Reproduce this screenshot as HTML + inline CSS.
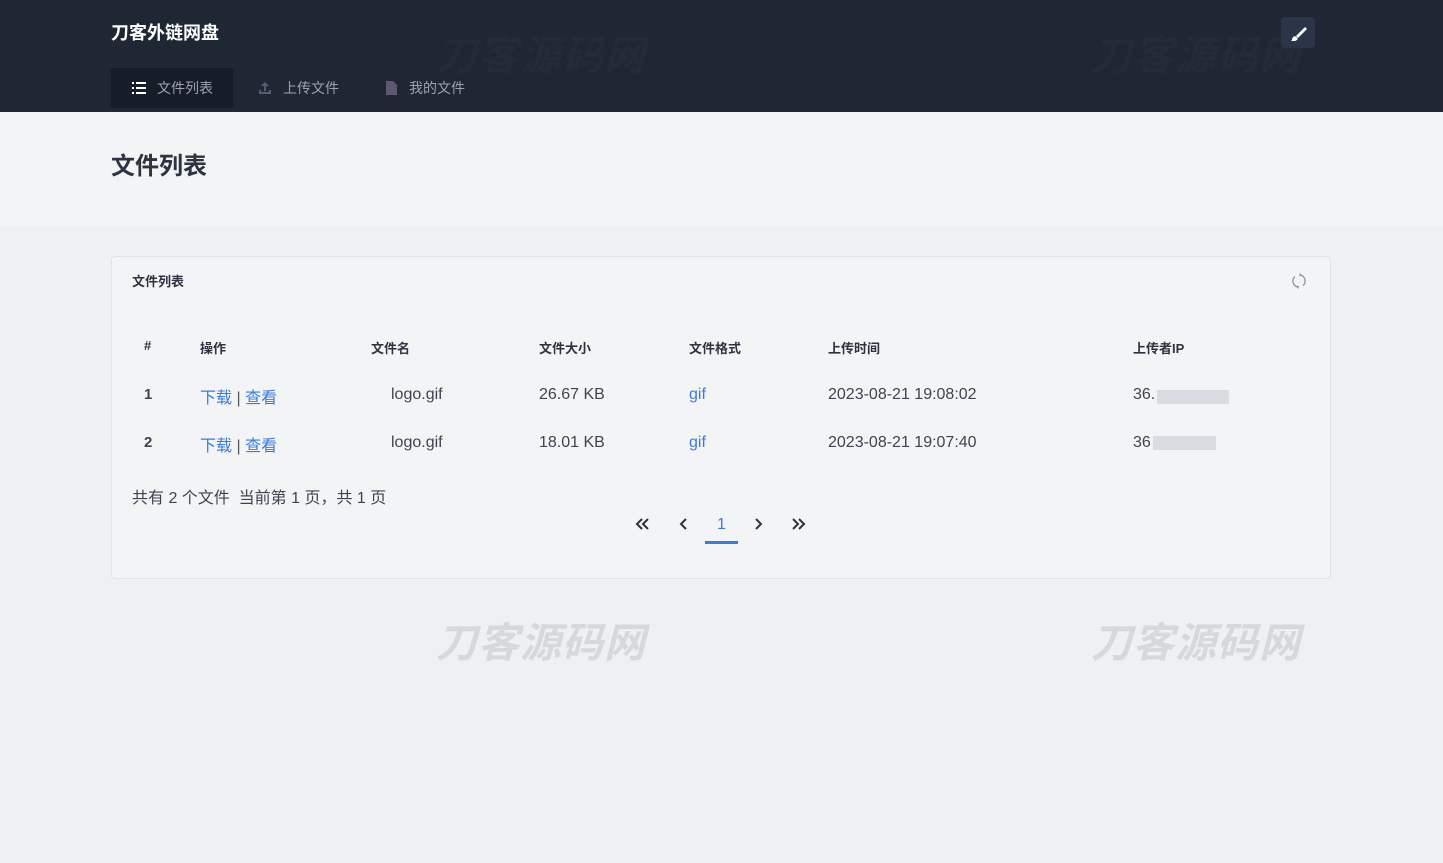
<!DOCTYPE html>
<html><head><meta charset="utf-8">
<style>
*{margin:0;padding:0;box-sizing:border-box}
body{width:1443px;height:863px;overflow:hidden;font-family:"Liberation Sans","Noto Sans CJK SC",sans-serif;background:#edf1f4;position:relative;color:#374151}
.hdr{position:absolute;left:0;top:0;width:1443px;height:112px;background:#1f2735}
.title{position:absolute;left:111px;top:19px;color:#fff;font-size:18px;font-weight:bold}
.brush{position:absolute;left:1281px;top:17px;width:34px;height:31px;background:#2b3547;border-radius:4px}
.tab{position:absolute;top:68px;height:40px;font-size:14px;color:#9ca3af;line-height:40px}
.tab.act{background:#171d28;left:111px;width:122px;padding-left:46px}
.gray{position:absolute;left:0;top:112px;width:1443px;height:113px;background:#f3f4f6}
h1{position:absolute;left:111px;top:146px;font-size:24px;color:#2d3340;font-weight:bold}
.wm{position:absolute;font-size:41px;font-weight:bold;font-style:italic;color:#d6d9dc;letter-spacing:1px}
.card{position:absolute;left:111px;top:256px;width:1220px;height:323px;background:#f3f4f6;border:1px solid #dde4ea;border-radius:4px}
.ct{position:absolute;left:20px;top:14px;font-size:13px;font-weight:bold;color:#2d3340}
.th{position:absolute;top:81px;font-size:13px;font-weight:bold;color:#2d3340}
.td{position:absolute;font-size:15px;color:#3d4451}
.lk{color:#3b7be0}
.blur{position:absolute;background:#d9dce1;height:14px}
.pg{position:absolute;top:257px;font-size:16px;color:#2d3340}
</style></head><body>
<div class="hdr">
<div class="wm" style="left:436px;top:22px;color:#232b39">刀客源码网</div>
<div class="wm" style="left:1091px;top:22px;color:#232b39">刀客源码网</div>
<div class="title">刀客外链网盘</div>
<div class="brush"><svg width="34" height="31" viewBox="0 0 34 31"><path d="M24 10 L15 19 L17 21 L26 12 Z" fill="#fff"/><path d="M14 19 Q11 20 11 23 L10 24 L14 24 Q17 23 16.5 21 Z" fill="#fff"/></svg></div>
<div class="tab act"><svg style="position:absolute;left:21px;top:14px" width="14" height="12"><rect x="0" y="0" width="2" height="2" fill="#fff"/><rect x="4" y="0" width="10" height="2" fill="#fff"/><rect x="0" y="5" width="2" height="2" fill="#fff"/><rect x="4" y="5" width="10" height="2" fill="#fff"/><rect x="0" y="10" width="2" height="2" fill="#fff"/><rect x="4" y="10" width="10" height="2" fill="#fff"/></svg>文件列表</div>
<div class="tab" style="left:258px;padding-left:25px"><svg style="position:absolute;left:0;top:13px" width="14" height="14"><path d="M7 1 L3 5 H6 V10 H8 V5 H11 Z M1 9 V13 H13 V9 H11 V11 H3 V9Z" fill="#5d5873"/></svg>上传文件</div>
<div class="tab" style="left:386px;padding-left:23px"><svg style="position:absolute;left:0;top:13px" width="11" height="14"><path d="M0 0 H7 L11 4 V14 H0 Z" fill="#5d5873"/></svg>我的文件</div>
</div>
<div class="gray"></div>
<h1>文件列表</h1>
<div class="wm" style="left:436px;top:609px">刀客源码网</div>
<div class="wm" style="left:1091px;top:609px">刀客源码网</div>
<div class="card">
<div class="ct">文件列表</div>
<svg style="position:absolute;left:1179px;top:16px" width="16" height="16" viewBox="0 0 16 16" fill="none" stroke="#8a94a3" stroke-width="1.3"><path d="M4 3.5 A6 6 0 0 0 7 14"/><path d="M12 12.5 A6 6 0 0 0 9 2"/><path d="M9 0.5 L9 2.5 L11 2.5"/><path d="M7 15.5 L7 13.5 L5 13.5"/></svg>
<div class="th" style="left:32px">#</div>
<div class="th" style="left:88px">操作</div>
<div class="th" style="left:259px">文件名</div>
<div class="th" style="left:427px">文件大小</div>
<div class="th" style="left:577px">文件格式</div>
<div class="th" style="left:716px">上传时间</div>
<div class="th" style="left:1021px">上传者IP</div>
<div class="td" style="left:32px;top:129px;font-weight:bold">1</div>
<div class="td" style="left:88px;top:127px;font-size:16px"><span class="lk">下载</span> <span style="color:#555">|</span> <span class="lk">查看</span></div>
<div class="td" style="left:279px;top:129px;font-size:16px">logo.gif</div>
<div class="td" style="left:427px;top:129px;font-size:16px">26.67 KB</div>
<div class="td lk" style="left:577px;top:129px;font-size:16px">gif</div>
<div class="td" style="left:716px;top:129px;font-size:16px">2023-08-21 19:08:02</div>
<div class="td" style="left:1021px;top:129px;font-size:16px">36.</div>
<div class="blur" style="left:1045px;top:133px;width:72px"></div>
<div class="td" style="left:32px;top:177px;font-weight:bold">2</div>
<div class="td" style="left:88px;top:175px;font-size:16px"><span class="lk">下载</span> <span style="color:#555">|</span> <span class="lk">查看</span></div>
<div class="td" style="left:279px;top:177px;font-size:16px">logo.gif</div>
<div class="td" style="left:427px;top:177px;font-size:16px">18.01 KB</div>
<div class="td lk" style="left:577px;top:177px;font-size:16px">gif</div>
<div class="td" style="left:716px;top:177px;font-size:16px">2023-08-21 19:07:40</div>
<div class="td" style="left:1021px;top:177px;font-size:16px">36</div>
<div class="blur" style="left:1041px;top:179px;width:63px"></div>
<div class="td" style="left:20px;top:227px;font-size:16px">共有 2 个文件 &nbsp;当前第 1 页，共 1 页</div>
<svg style="position:absolute;left:523px;top:260px" width="180" height="16" fill="none" stroke="#2d3340" stroke-width="2"><path d="M7 2 L2 7 L7 12 M13 2 L8 7 L13 12"/><path d="M51 2 L46 7 L51 12"/><path d="M121 2 L126 7 L121 12"/><path d="M158 2 L163 7 L158 12 M164 2 L169 7 L164 12"/></svg>
<div class="pg" style="left:605px;top:259px;color:#3b7be0">1</div>
<div style="position:absolute;left:593px;top:284px;width:33px;height:3px;background:#3b7be0"></div>
</div>
</body></html>
